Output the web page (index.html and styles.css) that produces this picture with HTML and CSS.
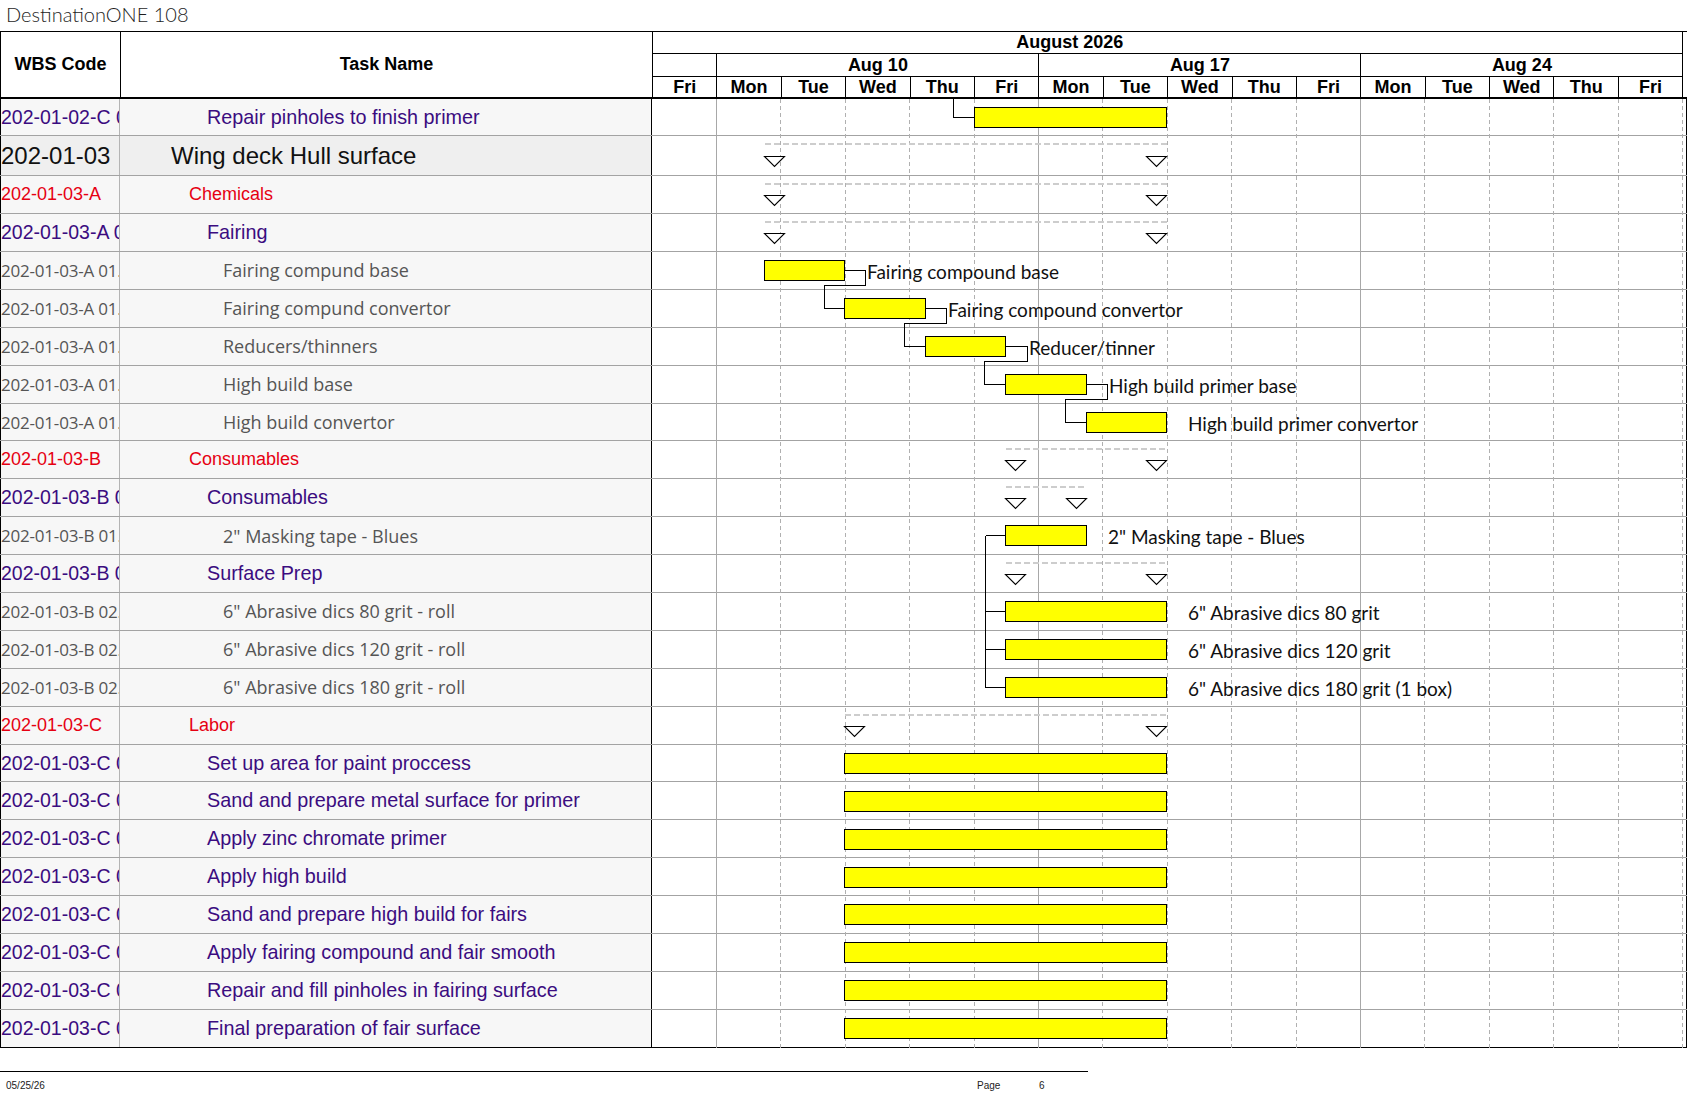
FILE: index.html
```html
<!DOCTYPE html>
<html lang="en">
<head>
<meta charset="utf-8">
<title>DestinationONE 108</title>
<link rel="stylesheet" href="styles.css">
</head>
<body>
<div class="title">DestinationONE 108</div>
<div class="sheet">
  <div class="head">
    <div class="h-cell h-wbs">WBS Code</div>
    <div class="h-cell h-name">Task Name</div>
    <div class="h-time">
      <div class="h-month">August 2026</div>
      <div class="h-weeks">
        <div class="wk"></div>
        <div class="wk">Aug 10</div>
        <div class="wk">Aug 17</div>
        <div class="wk">Aug 24</div>
      </div>
      <div class="h-days">
        <div class="day">Fri</div><div class="day">Mon</div><div class="day">Tue</div><div class="day">Wed</div><div class="day">Thu</div><div class="day">Fri</div>
        <div class="day">Mon</div><div class="day">Tue</div><div class="day">Wed</div><div class="day">Thu</div><div class="day">Fri</div>
        <div class="day">Mon</div><div class="day">Tue</div><div class="day">Wed</div><div class="day">Thu</div><div class="day">Fri</div>
      </div>
    </div>
  </div>

  <div class="body">
    <div class="row r-first task"><div class="c-wbs">202-01-02-C 09</div><div class="c-name">Repair pinholes to finish primer</div><div class="c-chart"></div></div>
    <div class="row r-sum summary"><div class="c-wbs">202-01-03</div><div class="c-name">Wing deck Hull surface</div><div class="c-chart"></div></div>
    <div class="row r-std cat"><div class="c-wbs">202-01-03-A</div><div class="c-name">Chemicals</div><div class="c-chart"></div></div>
    <div class="row r-std task"><div class="c-wbs">202-01-03-A 01</div><div class="c-name">Fairing</div><div class="c-chart"></div></div>
    <div class="row mat"><div class="c-wbs">202-01-03-A 01.01</div><div class="c-name">Fairing compund base</div><div class="c-chart"></div></div>
    <div class="row mat"><div class="c-wbs">202-01-03-A 01.02</div><div class="c-name">Fairing compund convertor</div><div class="c-chart"></div></div>
    <div class="row mat"><div class="c-wbs">202-01-03-A 01.03</div><div class="c-name">Reducers/thinners</div><div class="c-chart"></div></div>
    <div class="row mat"><div class="c-wbs">202-01-03-A 01.04</div><div class="c-name">High build base</div><div class="c-chart"></div></div>
    <div class="row mat"><div class="c-wbs">202-01-03-A 01.05</div><div class="c-name">High build convertor</div><div class="c-chart"></div></div>
    <div class="row cat"><div class="c-wbs">202-01-03-B</div><div class="c-name">Consumables</div><div class="c-chart"></div></div>
    <div class="row task"><div class="c-wbs">202-01-03-B 01</div><div class="c-name">Consumables</div><div class="c-chart"></div></div>
    <div class="row mat"><div class="c-wbs">202-01-03-B 01.01</div><div class="c-name">2" Masking tape - Blues</div><div class="c-chart"></div></div>
    <div class="row task"><div class="c-wbs">202-01-03-B 02</div><div class="c-name">Surface Prep</div><div class="c-chart"></div></div>
    <div class="row mat"><div class="c-wbs">202-01-03-B 02.01</div><div class="c-name">6" Abrasive dics 80 grit - roll</div><div class="c-chart"></div></div>
    <div class="row mat"><div class="c-wbs">202-01-03-B 02.02</div><div class="c-name">6" Abrasive dics 120 grit - roll</div><div class="c-chart"></div></div>
    <div class="row mat"><div class="c-wbs">202-01-03-B 02.03</div><div class="c-name">6" Abrasive dics 180 grit - roll</div><div class="c-chart"></div></div>
    <div class="row cat"><div class="c-wbs">202-01-03-C</div><div class="c-name">Labor</div><div class="c-chart"></div></div>
    <div class="row task"><div class="c-wbs">202-01-03-C 01</div><div class="c-name">Set up area for paint proccess</div><div class="c-chart"></div></div>
    <div class="row task"><div class="c-wbs">202-01-03-C 02</div><div class="c-name">Sand and prepare metal surface for primer</div><div class="c-chart"></div></div>
    <div class="row task"><div class="c-wbs">202-01-03-C 03</div><div class="c-name">Apply zinc chromate primer</div><div class="c-chart"></div></div>
    <div class="row task"><div class="c-wbs">202-01-03-C 04</div><div class="c-name">Apply high build</div><div class="c-chart"></div></div>
    <div class="row task"><div class="c-wbs">202-01-03-C 05</div><div class="c-name">Sand and prepare high build for fairs</div><div class="c-chart"></div></div>
    <div class="row task"><div class="c-wbs">202-01-03-C 06</div><div class="c-name">Apply fairing compound and fair smooth</div><div class="c-chart"></div></div>
    <div class="row task"><div class="c-wbs">202-01-03-C 07</div><div class="c-name">Repair and fill pinholes in fairing surface</div><div class="c-chart"></div></div>
    <div class="row task r-last"><div class="c-wbs">202-01-03-C 08</div><div class="c-name">Final preparation of fair surface</div><div class="c-chart"></div></div>

    <svg class="gantt" width="1035" height="949" viewBox="0 0 1035 949" xmlns="http://www.w3.org/2000/svg">
      <g class="grid-solid">
        <line x1="64.5" y1="0" x2="64.5" y2="949"/>
        <line x1="386.5" y1="0" x2="386.5" y2="949"/>
        <line x1="708.5" y1="0" x2="708.5" y2="949"/>
      </g>
      <g class="grid-dash">
        <line x1="128.5" y1="0" x2="128.5" y2="949"/>
        <line x1="193.5" y1="0" x2="193.5" y2="949"/>
        <line x1="257.5" y1="0" x2="257.5" y2="949"/>
        <line x1="322.5" y1="0" x2="322.5" y2="949"/>
        <line x1="450.5" y1="0" x2="450.5" y2="949"/>
        <line x1="515.5" y1="0" x2="515.5" y2="949"/>
        <line x1="579.5" y1="0" x2="579.5" y2="949"/>
        <line x1="644.5" y1="0" x2="644.5" y2="949"/>
        <line x1="772.5" y1="0" x2="772.5" y2="949"/>
        <line x1="837.5" y1="0" x2="837.5" y2="949"/>
        <line x1="901.5" y1="0" x2="901.5" y2="949"/>
        <line x1="966.5" y1="0" x2="966.5" y2="949"/>
        <line x1="1030.5" y1="0" x2="1030.5" y2="949"/>
      </g>

      <!-- summary lines -->
      <g class="sum-line">
        <line x1="112.5" y1="45" x2="514.5" y2="45"/>
        <line x1="112.5" y1="85" x2="514.5" y2="85"/>
        <line x1="112.5" y1="123" x2="514.5" y2="123"/>
        <line x1="353.5" y1="350" x2="514.5" y2="350"/>
        <line x1="353.5" y1="388" x2="434.5" y2="388"/>
        <line x1="353.5" y1="464" x2="514.5" y2="464"/>
        <line x1="192.5" y1="616" x2="514.5" y2="616"/>
      </g>
      <g class="tri">
        <path d="M112.5,57.5 h20 l-10,10 z"/><path d="M494.5,57.5 h20 l-10,10 z"/>
        <path d="M112.5,96.5 h20 l-10,10 z"/><path d="M494.5,96.5 h20 l-10,10 z"/>
        <path d="M112.5,134.5 h20 l-10,10 z"/><path d="M494.5,134.5 h20 l-10,10 z"/>
        <path d="M353.5,361.5 h20 l-10,10 z"/><path d="M494.5,361.5 h20 l-10,10 z"/>
        <path d="M353.5,399.5 h20 l-10,10 z"/><path d="M414.5,399.5 h20 l-10,10 z"/>
        <path d="M353.5,475.5 h20 l-10,10 z"/><path d="M494.5,475.5 h20 l-10,10 z"/>
        <path d="M192.5,627.5 h20 l-10,10 z"/><path d="M494.5,627.5 h20 l-10,10 z"/>
      </g>

      <!-- links -->
      <g class="link">
        <polyline points="301.5,0 301.5,18.5 322.5,18.5"/>
        <polyline points="192.5,171.5 213.5,171.5 213.5,186.5 172.5,186.5 172.5,209.5 192.5,209.5"/>
        <polyline points="273.5,209.5 294.5,209.5 294.5,224.5 252.5,224.5 252.5,247.5 273.5,247.5"/>
        <polyline points="353.5,247.5 375.5,247.5 375.5,262.5 332.5,262.5 332.5,285.5 353.5,285.5"/>
        <polyline points="434.5,285.5 455.5,285.5 455.5,300.5 413.5,300.5 413.5,323.5 434.5,323.5"/>
        <line x1="333.5" y1="436.5" x2="333.5" y2="588.5"/>
        <line x1="333.5" y1="436.5" x2="353.5" y2="436.5"/>
        <line x1="333.5" y1="512.5" x2="353.5" y2="512.5"/>
        <line x1="333.5" y1="550.5" x2="353.5" y2="550.5"/>
        <line x1="333.5" y1="588.5" x2="353.5" y2="588.5"/>
      </g>

      <!-- bars -->
      <g class="bar">
        <rect x="322.5" y="8.5" width="192" height="20"/>
        <rect x="112.5" y="161.5" width="80" height="20"/>
        <rect x="192.5" y="199.5" width="81" height="20"/>
        <rect x="273.5" y="237.5" width="80" height="20"/>
        <rect x="353.5" y="275.5" width="81" height="20"/>
        <rect x="434.5" y="313.5" width="80" height="20"/>
        <rect x="353.5" y="426.5" width="81" height="20"/>
        <rect x="353.5" y="502.5" width="161" height="20"/>
        <rect x="353.5" y="540.5" width="161" height="20"/>
        <rect x="353.5" y="578.5" width="161" height="20"/>
        <rect x="192.5" y="654.5" width="322" height="20"/>
        <rect x="192.5" y="692.5" width="322" height="20"/>
        <rect x="192.5" y="730.5" width="322" height="20"/>
        <rect x="192.5" y="768.5" width="322" height="20"/>
        <rect x="192.5" y="805.5" width="322" height="20"/>
        <rect x="192.5" y="843.5" width="322" height="20"/>
        <rect x="192.5" y="881.5" width="322" height="20"/>
        <rect x="192.5" y="919.5" width="322" height="20"/>
      </g>

      <!-- labels -->
      <g class="lbl">
        <text x="215" y="179.5">Fairing compound base</text>
        <text x="296" y="217.5">Fairing compound convertor</text>
        <text x="377" y="255.5">Reducer/tinner</text>
        <text x="457" y="293.5">High build primer base</text>
        <text x="536" y="331.5">High build primer convertor</text>
        <text x="456" y="444.5">2" Masking tape - Blues</text>
        <text x="536" y="520.5">6" Abrasive dics 80 grit</text>
        <text x="536" y="558.5">6" Abrasive dics 120 grit</text>
        <text x="536" y="596.5">6" Abrasive dics 180 grit (1 box)</text>
      </g>
    </svg>
  </div>
</div>
<div class="footer">
  <div class="f-date">05/25/26</div>
  <div class="f-page">Page</div>
  <div class="f-num">6</div>
</div>
</body>
</html>
```
FILE: styles.css
```css
* { box-sizing: border-box; }
html, body { margin: 0; padding: 0; background: #fff; }
body {
  width: 1687px;
  height: 1097px;
  overflow: hidden;
  font-family: "Liberation Sans", Arial, sans-serif;
  color: #000;
}

.title {
  height: 31px;
  padding-left: 6px;
  font-family: Lato, "Liberation Sans", sans-serif;
  font-weight: 300;
  font-size: 20px;
  line-height: 29px;
  color: #1e1e1e;
}

.sheet { width: 1687px; }

/* ---------- header ---------- */
.head {
  display: flex;
  height: 68px;
  border-top: 1px solid #000;
  border-bottom: 2px solid #000;
}
.h-cell {
  display: flex;
  align-items: center;
  justify-content: center;
  font-weight: bold;
  font-size: 18px;
  border-left: 1px solid #000;
}
.h-wbs { width: 120px; }
.h-name { width: 532px; }
.h-time {
  width: 1031.4px;
  display: flex;
  flex-direction: column;
  border-right: 1px solid #000;
  font-weight: bold;
  font-size: 18px;
}
.h-month {
  height: 22px;
  line-height: 21px;
  text-align: center;
  padding-right: 196px;
  border-left: 1px solid #000;
  border-bottom: 1px solid #000;
}
.h-weeks {
  height: 23px;
  display: grid;
  grid-template-columns: 64.4px 322px 322px 322px;
  border-bottom: 1px solid #000;
}
.wk {
  border-left: 1px solid #000;
  text-align: center;
  line-height: 22px;
}
.h-days {
  height: 20px;
  display: grid;
  grid-template-columns: repeat(16, 64.4px);
}
.day {
  border-left: 1px solid #000;
  text-align: center;
  line-height: 20px;
}

/* ---------- body ---------- */
.body { position: relative; }
.row {
  display: grid;
  grid-template-columns: 120px 532px 1035px;
  height: 37.9px;
  border-bottom: 1px solid #a3a3a3;
}
.row.r-first { height: 37px; }
.row.r-sum { height: 40px; }
.row.r-std { height: 38px; }
.row.r-last { border-bottom-color: #000; }

.c-wbs, .c-name {
  display: flex;
  align-items: center;
  white-space: nowrap;
  overflow: hidden;
  background: #f7f7f7;
}
.c-wbs {
  border-left: 1px solid #000;
  border-right: 1px solid #b4b4b4;
}
.c-name { border-right: 1px solid #000; }
.c-chart {
  background: #fff;
  border-right: 1px solid #000;
}

.task .c-wbs, .task .c-name { color: #3b0c80; font-size: 19.8px; }
.task .c-wbs { font-size: 19.5px; }
.task .c-name { padding-left: 87px; }

.summary .c-wbs, .summary .c-name { color: #111; font-size: 24px; background: #efefef; }
.summary .c-name { padding-left: 51px; }

.cat .c-wbs, .cat .c-name { color: #e60012; font-size: 18px; }
.cat .c-name { padding-left: 69px; }

.mat .c-wbs, .mat .c-name {
  color: #555;
  font-family: "Open Sans", "Noto Sans", sans-serif;
  font-size: 18px;
}
.mat .c-wbs { font-size: 17px; letter-spacing: -0.2px; }
.mat .c-name { padding-left: 103px; }

/* ---------- gantt overlay ---------- */
.gantt {
  position: absolute;
  left: 652px;
  top: 0;
  width: 1035px;
  height: 949px;
  overflow: visible;
}
.grid-solid line { stroke: #a8a8a8; stroke-width: 1; shape-rendering: crispEdges; }
.grid-dash line { stroke: #b0b0b0; stroke-width: 1; stroke-dasharray: 4 3; shape-rendering: crispEdges; }
.sum-line line { stroke: #cdcdcd; stroke-width: 2; stroke-dasharray: 6 3; shape-rendering: crispEdges; }
.tri path { fill: #fff; stroke: #000; stroke-width: 1.1; }
.link polyline, .link line { fill: none; stroke: #000; stroke-width: 1; shape-rendering: crispEdges; }
.bar rect { fill: #ffff00; stroke: #000; stroke-width: 1; shape-rendering: crispEdges; }
.lbl text {
  font-family: Lato, "Open Sans", sans-serif;
  font-size: 19px;
  fill: #111;
}

/* ---------- footer ---------- */
.footer {
  margin-top: 23.5px;
  width: 1088px;
  border-top: 1px solid #000;
  display: flex;
  padding-top: 8px;
  font-size: 10px;
  line-height: 12px;
  color: #222;
}
.f-date { width: 977px; padding-left: 6px; }
.f-page { width: 62px; }
```
